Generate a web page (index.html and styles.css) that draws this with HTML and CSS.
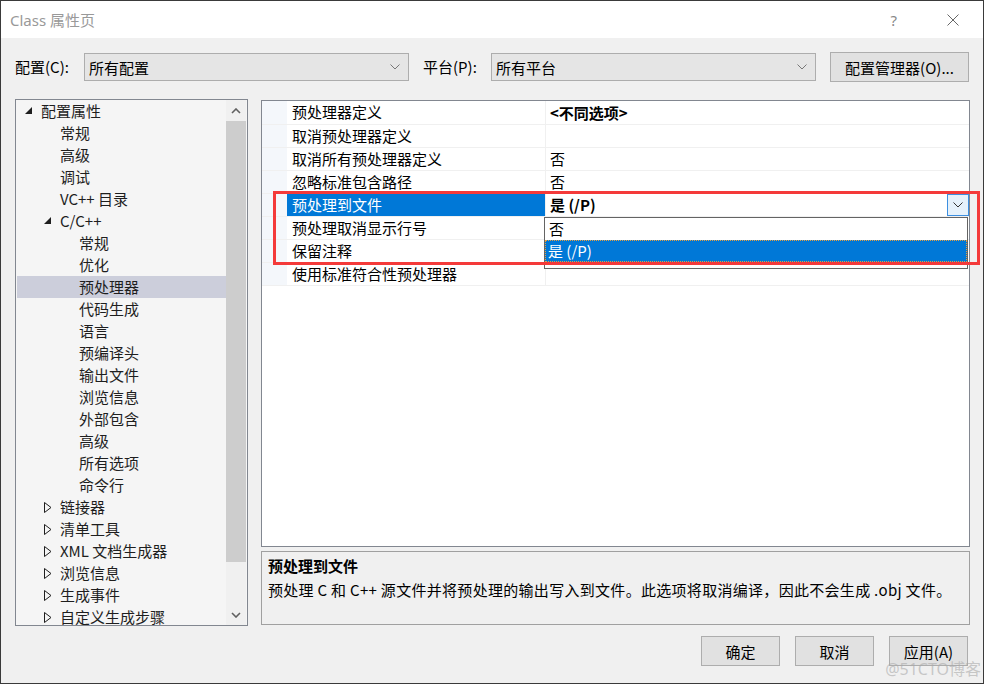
FILE: index.html
```html
<!DOCTYPE html>
<html lang="zh-CN">
<head>
    <meta charset="UTF-8">
    <title>Class 属性页</title>
    <link rel="stylesheet" href="styles.css">
</head>
<body>
    <div class="window">
        <div class="titlebar">
            <span class="title">Class 属性页</span>
            <span class="help">?</span>
            <svg class="close" width="12" height="12" viewBox="0 0 12 12"><path d="M0.5 0.5 L11.5 11.5 M11.5 0.5 L0.5 11.5" stroke="#666" stroke-width="1" fill="none"/></svg>
        </div>

        <div class="config-row">
            <span class="label label-config">配置(C):</span>
            <div class="combo">
                <span>所有配置</span>
                <svg class="chev" width="10" height="6" viewBox="0 0 10 6"><path d="M0.5 0.5 L5 5 L9.5 0.5" stroke="#777" stroke-width="1" fill="none"/></svg>
            </div>
            <span class="label label-platform">平台(P):</span>
            <div class="combo">
                <span>所有平台</span>
                <svg class="chev" width="10" height="6" viewBox="0 0 10 6"><path d="M0.5 0.5 L5 5 L9.5 0.5" stroke="#777" stroke-width="1" fill="none"/></svg>
            </div>
            <button class="btn btn-manager">配置管理器(O)...</button>
        </div>

        <div class="main">
            <div class="tree">
                <ul class="tree-list">
                    <li class="lvl0"><span class="exp"><svg width="8" height="8" viewBox="0 0 8 8"><path d="M7 0 L7 7 L0 7 Z" fill="#1e1e1e"/></svg></span>配置属性</li>
                    <li class="lvl1"><span class="exp"></span>常规</li>
                    <li class="lvl1"><span class="exp"></span>高级</li>
                    <li class="lvl1"><span class="exp"></span>调试</li>
                    <li class="lvl1"><span class="exp"></span>VC++ 目录</li>
                    <li class="lvl1"><span class="exp"><svg width="8" height="8" viewBox="0 0 8 8"><path d="M7 0 L7 7 L0 7 Z" fill="#1e1e1e"/></svg></span>C/C++</li>
                    <li class="lvl2"><span class="exp"></span>常规</li>
                    <li class="lvl2"><span class="exp"></span>优化</li>
                    <li class="lvl2 selected"><span class="exp"></span>预处理器</li>
                    <li class="lvl2"><span class="exp"></span>代码生成</li>
                    <li class="lvl2"><span class="exp"></span>语言</li>
                    <li class="lvl2"><span class="exp"></span>预编译头</li>
                    <li class="lvl2"><span class="exp"></span>输出文件</li>
                    <li class="lvl2"><span class="exp"></span>浏览信息</li>
                    <li class="lvl2"><span class="exp"></span>外部包含</li>
                    <li class="lvl2"><span class="exp"></span>高级</li>
                    <li class="lvl2"><span class="exp"></span>所有选项</li>
                    <li class="lvl2"><span class="exp"></span>命令行</li>
                    <li class="lvl1"><span class="exp"><svg width="8" height="11" viewBox="0 0 8 11"><path d="M0.5 0.5 L7 5.5 L0.5 10.5 Z" stroke="#1e1e1e" stroke-width="1" fill="none"/></svg></span>链接器</li>
                    <li class="lvl1"><span class="exp"><svg width="8" height="11" viewBox="0 0 8 11"><path d="M0.5 0.5 L7 5.5 L0.5 10.5 Z" stroke="#1e1e1e" stroke-width="1" fill="none"/></svg></span>清单工具</li>
                    <li class="lvl1"><span class="exp"><svg width="8" height="11" viewBox="0 0 8 11"><path d="M0.5 0.5 L7 5.5 L0.5 10.5 Z" stroke="#1e1e1e" stroke-width="1" fill="none"/></svg></span>XML 文档生成器</li>
                    <li class="lvl1"><span class="exp"><svg width="8" height="11" viewBox="0 0 8 11"><path d="M0.5 0.5 L7 5.5 L0.5 10.5 Z" stroke="#1e1e1e" stroke-width="1" fill="none"/></svg></span>浏览信息</li>
                    <li class="lvl1"><span class="exp"><svg width="8" height="11" viewBox="0 0 8 11"><path d="M0.5 0.5 L7 5.5 L0.5 10.5 Z" stroke="#1e1e1e" stroke-width="1" fill="none"/></svg></span>生成事件</li>
                    <li class="lvl1"><span class="exp"><svg width="8" height="11" viewBox="0 0 8 11"><path d="M0.5 0.5 L7 5.5 L0.5 10.5 Z" stroke="#1e1e1e" stroke-width="1" fill="none"/></svg></span>自定义生成步骤</li>
                </ul>
                <div class="vscroll">
                    <div class="sb-arrow"><svg width="10" height="6" viewBox="0 0 10 6"><path d="M1 5 L5 1 L9 5" stroke="#606060" stroke-width="1.6" fill="none"/></svg></div>
                    <div class="sb-track"><div class="sb-thumb"></div></div>
                    <div class="sb-arrow"><svg width="10" height="6" viewBox="0 0 10 6"><path d="M1 1 L5 5 L9 1" stroke="#606060" stroke-width="1.6" fill="none"/></svg></div>
                </div>
            </div>

            <div class="right">
                <div class="grid">
                    <div class="prop-row">
                        <div class="gutter"></div>
                        <div class="prop-name">预处理器定义</div>
                        <div class="prop-value bold">&lt;不同选项&gt;</div>
                    </div>
                    <div class="prop-row">
                        <div class="gutter"></div>
                        <div class="prop-name">取消预处理器定义</div>
                        <div class="prop-value"></div>
                    </div>
                    <div class="prop-row">
                        <div class="gutter"></div>
                        <div class="prop-name">取消所有预处理器定义</div>
                        <div class="prop-value">否</div>
                    </div>
                    <div class="prop-row">
                        <div class="gutter"></div>
                        <div class="prop-name">忽略标准包含路径</div>
                        <div class="prop-value">否</div>
                    </div>
                    <div class="prop-row active">
                        <div class="gutter"></div>
                        <div class="prop-name">预处理到文件</div>
                        <div class="prop-value bold">
                            <span>是 (/P)</span>
                            <span class="drop-btn"><svg width="10" height="6" viewBox="0 0 10 6"><path d="M0.5 0.5 L5 5 L9.5 0.5" stroke="#333" stroke-width="1" fill="none"/></svg></span>
                        </div>
                    </div>
                    <div class="prop-row">
                        <div class="gutter"></div>
                        <div class="prop-name">预处理取消显示行号</div>
                        <div class="prop-value"></div>
                    </div>
                    <div class="prop-row">
                        <div class="gutter"></div>
                        <div class="prop-name">保留注释</div>
                        <div class="prop-value"></div>
                    </div>
                    <div class="prop-row last">
                        <div class="gutter"></div>
                        <div class="prop-name">使用标准符合性预处理器</div>
                        <div class="prop-value"></div>
                    </div>

                    <ul class="dropdown">
                        <li>否</li>
                        <li class="picked">是 (/P)</li>
                    </ul>
                </div>

                <div class="desc">
                    <div class="desc-title">预处理到文件</div>
                    <div class="desc-text">预处理 C 和 C++ 源文件并将预处理的输出写入到文件。此选项将取消编译，因此不会生成 .obj 文件。</div>
                </div>
            </div>
        </div>

        <div class="buttons">
            <button class="btn">确定</button>
            <button class="btn">取消</button>
            <button class="btn">应用(A)</button>
        </div>

        <div class="highlight"></div>
        <div class="watermark">@51CTO博客</div>
    </div>
</body>
</html>
```

FILE: styles.css
```css
* {
    box-sizing: border-box;
}
body {
    margin: 0;
    padding: 0;
    background-color: #f0f0f0;
    font-family: "Noto Sans CJK SC", sans-serif;
    font-size: 15px;
    color: #000;
}
.window {
    position: relative;
    width: 984px;
    height: 684px;
    border: 1px solid #3a3a3a;
    background-color: #f0f0f0;
    overflow: hidden;
}
.titlebar {
    display: flex;
    align-items: center;
    height: 37px;
    background-color: #fff;
    padding-left: 9px;
}
.title {
    color: #999;
    font-family: "Noto Sans", "Noto Sans CJK SC", sans-serif;
    font-size: 15px;
    flex: 1;
}
.help {
    color: #888;
    font-family: "Noto Sans", sans-serif;
    font-size: 15px;
    margin-right: 50px;
}
.close {
    margin-right: 24px;
}
.config-row {
    display: flex;
    align-items: center;
    height: 30px;
    margin-top: 14px;
    padding-left: 14px;
}
.label {
    line-height: 20px;
}
.label-config {
    width: 69px;
}
.label-platform {
    width: 68px;
    margin-left: 14px;
}
.combo {
    display: flex;
    align-items: center;
    justify-content: space-between;
    width: 325px;
    height: 28px;
    background-color: #e5e5e5;
    border: 1px solid #adadad;
    padding: 0 8px 0 4px;
}
.btn {
    height: 30px;
    width: 79px;
    background-color: #e1e1e1;
    border: 1px solid #adadad;
    font-family: "Noto Sans CJK SC", sans-serif;
    font-size: 15px;
    color: #000;
    padding: 0;
}
.btn-manager {
    width: 139px;
    margin-left: 14px;
}
.main {
    display: flex;
    margin-top: 17px;
    padding-left: 14px;
    height: 527px;
}
.tree {
    display: flex;
    width: 233px;
    height: 527px;
    border: 1px solid #828790;
    background-color: #f5f5f5;
}
.tree-list {
    list-style: none;
    margin: 0;
    padding: 0;
    flex: 1;
    overflow: hidden;
}
.tree-list li {
    display: flex;
    align-items: center;
    height: 22px;
    line-height: 22px;
    white-space: nowrap;
    color: #1e1e1e;
}
.tree-list .exp {
    width: 16px;
    display: flex;
    align-items: center;
}
.tree-list .lvl0 {
    padding-left: 9px;
}
.tree-list .lvl1 {
    padding-left: 28px;
}
.tree-list .lvl2 {
    padding-left: 47px;
}
.tree-list li.selected {
    background-color: #cccedb;
    margin-left: 1px;
}
.tree-list li.selected .exp {
    width: 15px;
}
.vscroll {
    width: 20px;
    display: flex;
    flex-direction: column;
    background-color: #f0f0f0;
    margin-right: 1px;
}
.sb-arrow {
    height: 21px;
    display: flex;
    align-items: center;
    justify-content: center;
}
.sb-track {
    flex: 1;
}
.sb-thumb {
    height: 441px;
    background-color: #cdcdcd;
}
.right {
    display: flex;
    flex-direction: column;
    margin-left: 13px;
    margin-top: 1px;
    width: 709px;
}
.grid {
    position: relative;
    height: 447px;
    border: 1px solid #828790;
    background-color: #fff;
}
.prop-row {
    display: flex;
    height: 23px;
    border-top: 1px solid #f0f0f0;
}
.prop-row:first-child {
    border-top: none;
    height: 23px;
}
.prop-row.last {
    height: 24px;
    border-bottom: 1px solid #f0f0f0;
}
.gutter {
    width: 25px;
    background-color: #f4f7fb;
}
.prop-name {
    width: 259px;
    padding-left: 5px;
    border-right: 1px solid #f0f0f0;
    line-height: 22px;
    white-space: nowrap;
}
.prop-value {
    flex: 1;
    display: flex;
    align-items: center;
    justify-content: space-between;
    padding-left: 4px;
    line-height: 22px;
}
.bold {
    font-weight: bold;
}
.prop-row.active .prop-name {
    background-color: #0078d7;
    color: #fff;
}
.drop-btn {
    display: flex;
    align-items: center;
    justify-content: center;
    width: 22px;
    height: 22px;
    background-color: #e5f1fb;
    border: 1px solid #3d8fe0;
}
.dropdown {
    position: absolute;
    left: 282px;
    top: 116px;
    width: 424px;
    height: 52px;
    margin: 0;
    padding: 0;
    list-style: none;
    background-color: #fff;
    border: 1px solid #646464;
}
.dropdown li {
    height: 22px;
    line-height: 22px;
    padding-left: 4px;
}
.dropdown li.picked {
    background-color: #0078d7;
    color: #fff;
    outline: 1px dotted #e8a040;
    outline-offset: -1px;
    padding-left: 3px;
}
.desc {
    margin-top: 4px;
    height: 74px;
    border: 1px solid #a0a0a0;
    background-color: #f0f0f0;
    padding: 2px 6px;
}
.desc-title {
    font-weight: bold;
    line-height: 24px;
}
.desc-text {
    line-height: 24px;
    white-space: nowrap;
    letter-spacing: 0.3px;
}
.buttons {
    display: flex;
    justify-content: flex-end;
    gap: 15px;
    margin-top: 10px;
    padding-right: 15px;
}
.highlight {
    position: absolute;
    left: 272px;
    top: 190px;
    width: 707px;
    height: 74px;
    border: 3px solid #f43a3a;
}
.watermark {
    position: absolute;
    right: 2px;
    bottom: 3px;
    color: rgba(170, 170, 170, 0.6);
    font-size: 16px;
    font-family: "Noto Sans", "Noto Sans CJK SC", sans-serif;
}
```
